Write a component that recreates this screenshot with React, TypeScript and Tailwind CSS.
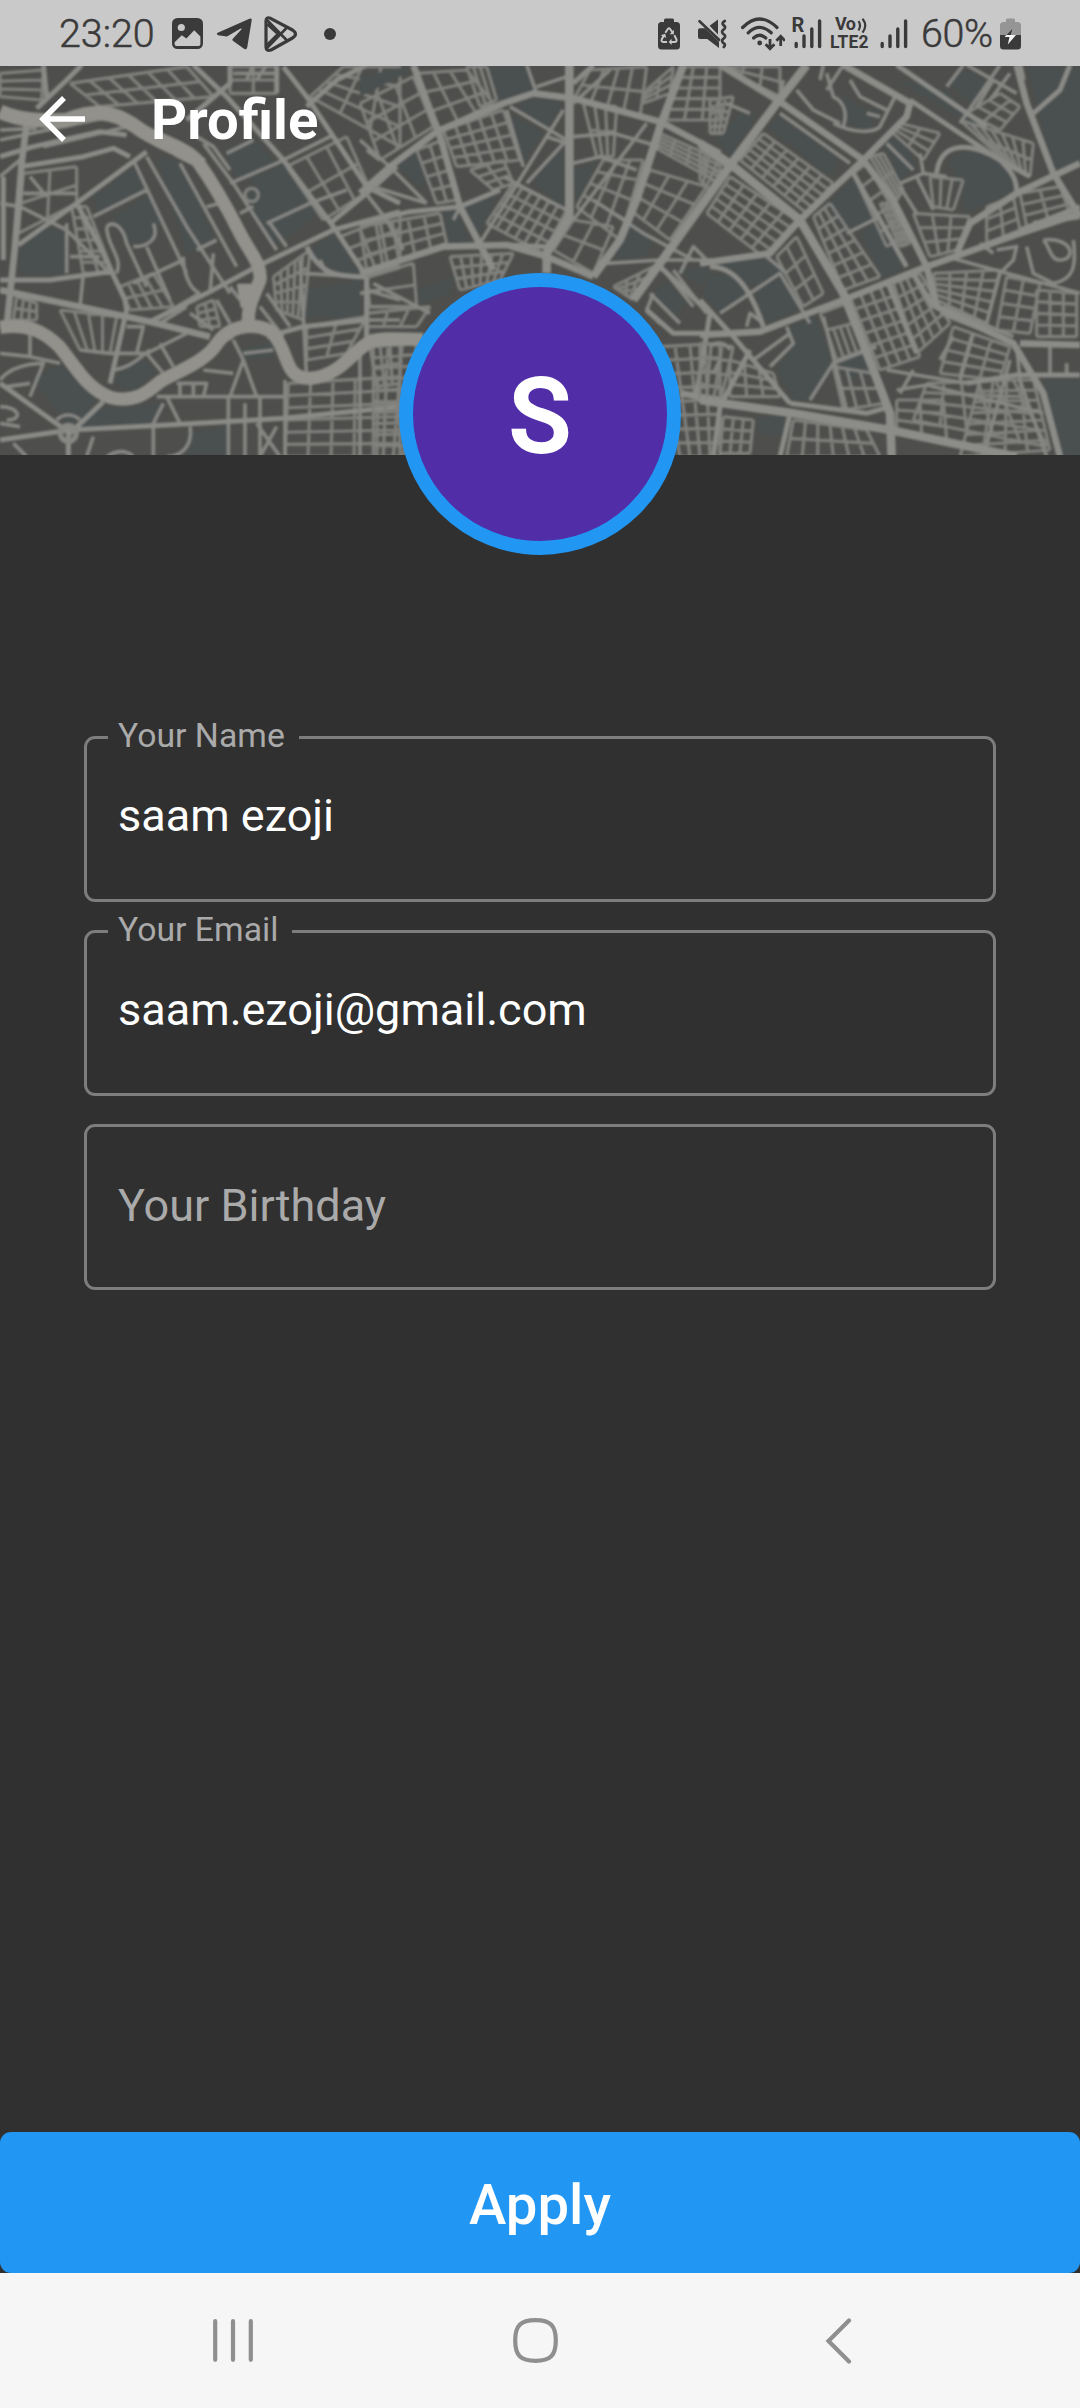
import React from "react";

type Pt = [number, number];
type Mesh = [Pt, Pt, Pt, Pt, number, number];

/* Street mesh between four corners: a-b is the top edge, d-c the bottom edge. */
function meshPath([a, b, c, d, nx, ny]: Mesh): string {
  const mix = (p: Pt, q: Pt, t: number): Pt => [p[0] + (q[0] - p[0]) * t, p[1] + (q[1] - p[1]) * t];
  const seg = (p: Pt, q: Pt) => `M${p[0].toFixed(1)} ${p[1].toFixed(1)}L${q[0].toFixed(1)} ${q[1].toFixed(1)}`;
  let out = "";
  for (let i = 0; i <= nx; i++) out += seg(mix(a, b, i / nx), mix(d, c, i / nx));
  for (let j = 0; j <= ny; j++) out += seg(mix(a, d, j / ny), mix(b, c, j / ny));
  return out;
}

type Sheet = { x: number; parks: string; meshes: Mesh[]; minor: string; mid: string; major: string };

const SHEETS: Sheet[] = [
  {
    x: 0,
    parks:
      "M280 410L400 320L450 390L300 460ZM670 270L770 240L830 310L710 360ZM760 350L850 310L960 460L830 560L730 430ZM60 560L140 500L200 520V640H55ZM340 470L450 400L490 470L460 550L390 550ZM915 690L1080 660V780L915 770ZM100 960L180 910L300 1010L210 1110ZM930 570L1000 520L1080 640L990 650ZM330 960L420 890L470 930L400 1000ZM470 290L540 300L650 550L560 580ZM250 1050L490 1030L460 1090L240 1100ZM560 1120L680 1100V1190H550ZM720 870L830 840L820 890L740 900Z",
    meshes: [
      [[210, 70], [560, 20], [640, 110], [300, 140], 6, 2],
      [[0, 40], [130, 30], [125, 120], [0, 110], 1, 3],
      [[70, 340], [230, 320], [230, 430], [55, 520], 2, 2],
      [[215, 440], [260, 440], [340, 640], [250, 640], 2, 6],
      [[360, 680], [460, 640], [520, 740], [390, 750], 4, 2],
      [[180, 750], [350, 770], [330, 880], [240, 870], 4, 1],
      [[820, 650], [930, 570], [910, 780], [830, 750], 5, 4],
      [[1030, 20], [1200, 20], [1200, 260], [930, 110], 3, 4],
      [[860, 320], [1040, 230], [1110, 390], [970, 480], 3, 2],
      [[1020, 530], [1200, 460], [1200, 600], [1090, 640], 3, 3],
      [[865, 970], [1200, 950], [1200, 1190], [855, 1190], 5, 6],
      [[1110, 860], [1200, 850], [1200, 970], [1130, 980], 3, 2],
      [[920, 800], [1100, 770], [1040, 880], [920, 900], 2, 3],
      [[50, 710], [110, 730], [110, 780], [40, 780], 3, 2],
      [[590, 740], [640, 720], [660, 800], [600, 800], 2, 3],
      [[690, 20], [830, 20], [830, 100], [690, 100], 2, 2],
    ],
    minor:
      "M0 350L60 300M0 240L330 170M70 400L230 400M90 350L140 410M0 430L60 440L200 510L330 640M400 300L560 640M440 290L560 500L690 700M540 310L710 620M620 440L660 430M590 570L650 540M550 590C550 640 570 690 600 700M640 580L630 700M280 470L440 390M320 500C340 480 370 500 380 550L440 680M320 500C320 560 370 590 350 640M400 560C440 560 480 540 460 490M440 560L510 720M400 670L550 600M200 490V640M210 590H300M250 640L240 740M610 250L700 370L830 570M690 370L830 310L1000 225M800 490L930 430M810 490L860 560M720 460L760 440M900 600L910 770L920 960M960 600L980 640M0 880L90 890L180 910M90 820V890M0 960C30 920 90 910 130 910L90 1010M20 980L90 970M240 870L330 880L440 880L560 820M380 800L430 800L410 880M440 880L490 940M480 850L520 920M340 930C400 920 420 890 450 870M610 930L700 940M700 840L730 900L690 1010M730 900L770 1010M660 850L700 830M730 880L820 870M470 1010L860 1010M500 1010L540 1090M490 1030L460 1090V1190M570 1100C580 1160 540 1190 500 1190M530 970L620 970L610 1010M540 970V1010M580 970V1010M685 1010V1190M735 1030V1190M780 1010V1190L830 1100M770 1090L840 1190M855 960V1190M0 1040C60 1040 70 1080 20 1080M40 1150L80 1190M320 1190C350 1170 380 1170 400 1190M280 1130L260 1190M170 1080C190 1060 220 1060 240 1080M1100 780H1200M1100 690L1200 720M1100 740H1200M780 740L850 830M800 700L870 800M570 760L640 810M480 790L560 740M650 720L690 790M690 680L720 720M760 15L740 60M800 15L770 60M700 40H830M910 640L1080 650M480 770L600 700M0 210L110 205M130 260L380 200M0 1090L60 1100M680 280L760 240M930 430L1040 390M590 230L640 260L690 330",
    mid: "M110 145L200 60L245 15M130 15L140 110M55 555L230 430L440 275M0 290L100 260L300 215L380 225M60 320L250 290L340 265L390 290M0 660H150L330 635M230 430L300 560L375 720L380 750L330 970M450 785L620 700L780 615L1000 510L1200 455M580 15L680 110L850 300L1000 500L1100 650V830M1200 310L1100 400L990 490M560 180L690 70V15M830 15V100M850 20L920 110L1000 230L1100 380L1200 430M920 140L1010 60L1100 15M920 560C960 640 1000 650 1100 650L1200 620M800 830L910 800L1100 780M0 1140L210 1110L500 1095L850 1075L1200 1040M0 970L210 1120L310 1025M205 1120V1190M10 350V600",
    major: "M80 190L65 310L45 560L20 800M0 690L240 740L450 785L630 830",
  },
  {
    x: 1080,
    parks:
      "M380 20H500L520 90L420 120ZM470 140L520 110L610 130L560 200ZM450 160L550 220L490 310ZM540 340L610 260V440L520 370ZM780 540L810 480L880 540L860 590L760 600ZM0 50L140 20L140 40L0 110ZM100 310L160 260L220 370L180 380ZM310 440L410 400L360 530ZM250 460L290 450L330 545L270 550ZM640 330L710 310L650 430ZM160 690L280 650L270 700L170 740ZM880 700L920 660L980 730L940 770ZM960 630L1050 620L1020 680Z",
    meshes: [
      [[0, 130], [160, 50], [220, 200], [60, 300], 3, 3],
      [[170, 40], [320, 30], [400, 130], [240, 210], 3, 3],
      [[320, 20], [380, 20], [410, 120], [360, 140], 3, 1],
      [[250, 210], [430, 150], [480, 300], [290, 320], 5, 4],
      [[170, 270], [250, 240], [290, 420], [230, 430], 2, 4],
      [[330, 330], [430, 300], [460, 370], [400, 390], 2, 3],
      [[460, 370], [620, 450], [550, 580], [380, 490], 6, 4],
      [[690, 30], [860, 20], [840, 170], [640, 120], 4, 2],
      [[670, 130], [770, 140], [760, 290], [710, 290], 3, 2],
      [[730, 300], [850, 300], [780, 540], [650, 440], 3, 4],
      [[860, 90], [940, 20], [930, 100], [850, 130], 2, 3],
      [[900, 220], [1080, 300], [1080, 370], [880, 260], 4, 4],
      [[870, 330], [1040, 380], [930, 540], [810, 450], 3, 3],
      [[0, 500], [240, 460], [260, 550], [20, 630], 5, 3],
      [[270, 590], [460, 580], [420, 660], [300, 690], 6, 3],
      [[20, 650], [160, 610], [170, 740], [30, 740], 1, 2],
      [[20, 760], [210, 740], [170, 800], [20, 800], 3, 1],
      [[40, 860], [170, 850], [130, 1190], [40, 1190], 3, 10],
      [[640, 480], [760, 500], [700, 640], [580, 570], 2, 2],
      [[760, 680], [880, 620], [820, 720], [790, 700], 3, 3],
      [[900, 860], [1080, 850], [1080, 1190], [960, 1190], 4, 8],
      [[960, 20], [1080, 20], [1080, 180], [920, 180], 3, 5],
    ],
    minor:
      "M0 240L100 330L200 430M10 390L80 480L130 570M40 380L200 430M500 15L530 100M530 80L620 50M450 140L620 240M610 150L360 550M440 150L490 320M620 240L500 370M620 450L430 350M560 230L620 250M640 230L760 220L900 260M640 310L720 290L830 330M860 190L640 480M700 420L850 520L1000 600M40 670L210 760M750 30L640 130M0 860V1190M740 610L900 600L1080 600M870 700L960 790M920 640L1000 740M880 700L860 750L900 790M960 640L1000 560L1040 600M300 440L280 480M560 590V640M0 700L60 690M940 630L1040 760M20 270L60 300",
    mid: "M0 490L150 455L300 440L420 390M640 70L700 15M440 555L560 560L620 490M900 620L1050 760L1010 1000M860 750L940 820H1080M20 650V830",
    major:
      "M0 400L90 320L230 215L430 130L520 100L640 115L900 185L1080 280M160 15L240 230L300 440L400 630M0 640L250 560L440 555L560 590L700 650M960 1000L1080 1020",
  },
  {
    x: 2100,
    parks:
      "M200 200L240 170L420 300L390 350ZM380 430L460 350L540 470L430 520ZM480 520L530 490L620 620L550 660ZM980 20H1140V300L1060 330ZM740 300L820 260L920 320L950 390L800 460L770 350ZM230 930L280 850L260 800L350 770L400 910L320 1020H280ZM590 60L740 90L880 230L740 150ZM1030 960H1140V1190H1090ZM740 60L800 30L880 70L820 140ZM20 640L100 640L150 700L60 760L10 710ZM160 690L240 650L300 750L200 790ZM50 230L130 150L170 170L90 290ZM30 610L210 590L250 640L150 680ZM420 100L500 150L540 140L510 210L430 190ZM550 250L600 230L650 310L600 360ZM420 910L490 880L510 940L440 960ZM170 1070H250V1130L170 1120Z",
    meshes: [
      [[80, 20], [240, 20], [240, 110], [60, 20], 3, 2],
      [[190, 220], [400, 370], [320, 460], [120, 300], 6, 5],
      [[90, 350], [290, 480], [190, 590], [20, 460], 5, 5],
      [[0, 270], [80, 320], [30, 390], [0, 360], 3, 3],
      [[340, 470], [390, 430], [540, 650], [430, 690], 3, 6],
      [[460, 340], [500, 310], [620, 520], [560, 560], 1, 5],
      [[510, 290], [550, 280], [610, 390], [590, 420], 3, 2],
      [[540, 430], [580, 430], [630, 550], [600, 560], 3, 7],
      [[600, 190], [720, 220], [670, 300], [580, 220], 2, 3],
      [[690, 350], [790, 360], [760, 450], [700, 440], 3, 1],
      [[640, 460], [810, 470], [770, 570], [690, 590], 3, 3],
      [[780, 180], [1000, 250], [990, 350], [900, 290], 7, 2],
      [[900, 100], [960, 140], [900, 210], [800, 160], 2, 3],
      [[860, 440], [940, 410], [960, 510], [860, 550], 2, 3],
      [[960, 400], [1080, 380], [1110, 460], [980, 500], 2, 3],
      [[700, 640], [900, 630], [860, 790], [710, 720], 4, 5],
      [[920, 650], [1020, 670], [990, 820], [890, 810], 2, 4],
      [[450, 710], [570, 670], [660, 890], [540, 930], 4, 6],
      [[580, 670], [660, 640], [750, 790], [650, 880], 4, 5],
      [[760, 800], [930, 860], [900, 960], [720, 940], 3, 4],
      [[680, 970], [940, 960], [1040, 1160], [640, 1080], 5, 4],
      [[590, 1020], [730, 1020], [740, 1140], [590, 1110], 2, 3],
      [[380, 810], [460, 790], [490, 870], [410, 900], 4, 1],
      [[360, 760], [440, 730], [460, 790], [380, 810], 1, 1],
      [[400, 920], [520, 940], [550, 1030], [430, 1050], 3, 2],
      [[1010, 690], [1130, 700], [1130, 830], [1010, 830], 3, 4],
      [[90, 900], [220, 940], [240, 1010], [90, 1010], 3, 3],
      [[0, 850], [100, 860], [60, 1030], [0, 1010], 3, 4],
      [[70, 1070], [160, 1080], [150, 1180], [60, 1180], 3, 3],
      [[280, 1080], [500, 1110], [540, 1190], [260, 1190], 6, 2],
      [[30, 120], [100, 110], [70, 220], [30, 220], 3, 5],
      [[230, 590], [290, 530], [370, 700], [310, 740], 2, 3],
      [[840, 960], [1000, 960], [1050, 1170], [780, 1190], 4, 7],
    ],
    minor:
      "M440 15L640 130M240 160L450 310M290 90L340 150L420 190M380 40L400 110C440 130 440 170 430 200M400 190C460 220 520 220 540 200L590 100M450 60L480 110L560 150M500 160L540 170M600 370L670 340L740 350M670 340L660 280M650 350L700 450M600 380L650 460M560 250L640 330M740 80L790 15M880 60L830 140M800 15L950 100M900 15L780 190M930 40L870 120M440 520L540 470M430 15L380 90M370 15L360 60M60 760L240 640L330 790M140 800L150 760L190 790M260 800L280 850L210 920M160 900L270 820M330 1020L400 910L530 860M30 860C50 840 80 850 90 870M1030 540C1120 530 1130 600 1080 600C1050 600 1050 560 1030 540M980 560L1000 640L1060 670C1120 660 1130 620 1120 540M890 570L950 560L940 600L900 640L860 790M840 550L880 580M740 590L1140 700M560 930L800 970M590 990L680 975L1030 1060M600 1000L640 930M950 860L960 960L1040 1190M1050 860V940M1100 910V945M720 760L900 830M730 740L940 830M820 820L780 960M850 1190L930 900M370 770L440 1050M720 900L760 830M60 900L40 940M250 60L240 110M150 160L80 130M200 590L260 640",
    mid: "M0 720L100 830L270 1030M630 120L900 300L990 350M710 340C720 250 800 240 900 300C940 340 950 360 950 400M800 970L950 945H1140M590 15L860 200M1110 15L1080 90L1000 160M270 1060L240 1190M60 1040L40 1190M30 620C100 620 150 680 190 800M460 340L620 620M560 660L650 880M270 1030L500 1060L570 1040M640 640L700 740M150 870L60 1040M1000 490L1140 470M960 510L1140 440M970 60L960 15",
    major:
      "M60 15L240 125L490 300L580 420L680 620L710 740L940 850L1030 1000L1080 1190M430 15L630 130L620 170L490 300L300 480L210 580L0 610M0 825L180 815L430 720L680 620L960 520L1140 460M950 15L980 130L1060 340L1140 470M770 580L810 490L950 400L1140 310M960 850L1140 855",
  },
];

function MapBackdrop() {
  return (
    <svg className="absolute inset-0 h-[389px] w-full" viewBox="0 18 3240 1167" preserveAspectRatio="none" fill="none">
      <rect y="18" width="3240" height="1167" fill="#4e4f4c" />
      <g className="blur-[2.4px]" strokeLinejoin="round">
        {SHEETS.map((s) => (
          <g key={s.x} transform={`translate(${s.x} 0)`}>
            <path d={s.parks} fill="#4a504f" />
            <path d={s.meshes.map(meshPath).join("")} stroke="#80807d" strokeWidth="9.5" />
            <path d={s.minor} stroke="#868683" strokeWidth="11" />
            <path d={s.mid} stroke="#8a8a87" strokeWidth="15" />
            <path d={s.major} stroke="#8b8b88" strokeWidth="20" />
          </g>
        ))}
        <circle cx="755" cy="405" r="20" stroke="#81817e" strokeWidth="10" />
        <circle cx="205" cy="1120" r="24" stroke="#868683" strokeWidth="16" />
        <g stroke="#8c8c89" strokeWidth="26">
          <path d="M1708 0V470L1640 580V640" />
          <path d="M2050 15L1980 200L1910 420L1860 540L1780 650" strokeWidth="24" />
          <path d="M2420 15L2330 130L2195 310L1980 610L1900 720" />
          <path d="M2100 250L2195 315L2400 480L2530 700L2620 930L2670 1060L2675 1190" />
          <path d="M2100 1020L2380 1060L2670 1110L3050 1190" />
        </g>
        <g stroke="#92918b">
          <path d="M0 155C60 180 120 185 200 180C280 150 330 150 400 195C460 240 520 260 570 285" strokeWidth="44" />
          <path d="M450 225C520 255 560 270 590 300C640 370 680 440 720 520C750 580 785 610 780 660C765 700 742 730 745 795" strokeWidth="40" />
          <path d="M500 235L610 300L600 320L530 285Z" strokeWidth="14" fill="#92918b" />
          <path d="M715 675H790L765 740H725Z" fill="#92918b" strokeWidth="8" />
          <path d="M0 802C80 790 130 812 180 862C230 925 260 985 330 1012C400 1030 440 1000 480 965C540 930 620 905 655 845C700 785 790 790 820 822C870 880 850 955 930 955C1020 950 1060 870 1110 845C1150 832 1200 838 1270 838" strokeWidth="40" />
        </g>
      </g>
    </svg>
  );
}

function Signal({ className }: { className: string }) {
  return (
    <svg className={className} viewBox="0 0 28 30" stroke="#3a3a3a" strokeWidth="3.4" strokeLinecap="round">
      <path d="M2.2 24.5V27.5M10 17V27.5M17.8 10V27.5M25.6 2V27.5" />
    </svg>
  );
}

function StatusBar() {
  return (
    <div className="relative z-10 flex h-[66px] items-center bg-[#c9c9c9] pl-[59px] pt-px text-[#3a3a3a]">
      <span className="w-[113px] text-[39.4px] font-light leading-[46px] [-webkit-text-stroke:0.5px_#3a3a3a]">23:20</span>
      <svg className="h-[31px] w-[31px]" viewBox="0 0 31 31">
        <rect width="31" height="31" rx="5.5" fill="#3a3a3a" />
        <circle cx="9.3" cy="9.5" r="3.6" fill="#c9c9c9" />
        <path d="M2.6 24.2L9.8 17.3L14.4 20.5L22.2 12.3L28.4 18.5V26Q28.4 28 26.4 28H4.6Q2.6 28 2.6 26Z" fill="#c9c9c9" />
      </svg>
      <svg className="ml-[13px] h-8 w-9" viewBox="0 0 36 32">
        <path d="M1.2 15.1L34 .5Q36 0 35.7 2.3L31.2 29.5Q30.7 32 28.4 30.9L16.8 22.8Q15.8 21.8 16.8 20.8L25.6 11.2Q26 9.8 24.2 10.8L11 18.6L2 17.2Q0 16.2 1.2 15.1Z" fill="#3a3a3a" />
      </svg>
      <svg className="ml-3 h-9 w-[34px]" viewBox="0 0 34 36" fill="none" stroke="#3a3a3a" strokeWidth="3.2" strokeLinejoin="round">
        <path d="M2 5Q2 0.5 6.5 2.3L28.5 14Q34.5 18 28.5 22L7 34Q2 35.5 2 31Z" />
        <path d="M3 4L23.5 25M3 32L23.5 11M3 8L14 18L3 29" strokeWidth="2.6" />
      </svg>
      <span className="ml-[26px] h-3 w-3 rounded-full bg-[#3a3a3a]" />

      <svg className="ml-[322px] h-8 w-[22px]" viewBox="0 0 22 32">
        <path d="M6 4V2Q6 .5 7.5.5H14.5Q16 .5 16 2V4H18.5Q22 4 22 7.5V28Q22 31.5 18.5 31.5H3.5Q0 31.5 0 28V7.5Q0 4 3.5 4Z" fill="#3a3a3a" />
        <path d="M7.3 14.8L10 10.8Q11 9.7 12 10.8L14.5 14.5M16.4 17.2L18.5 21.5Q19 24 16.5 24H13M9 24H5.3Q3 23.8 3.7 21.5L5.8 17.5" fill="none" stroke="#c9c9c9" strokeWidth="2" />
        <path d="M15.9 11.8V16.2H11.7ZM13.6 20.8V27L10.6 24ZM2.7 17.2L7.2 15.8L8.2 20Z" fill="#c9c9c9" />
      </svg>
      <svg className="ml-[17px] h-[30px] w-[31px]" viewBox="0 0 31 30">
        <path d="M1 11Q1 9.2 3 9.2H8L22 22.8V29L10.3 20H3Q1 20 1 18ZM12.6 6.8L21 .4V15.5Z" fill="#3a3a3a" />
        <path d="M2.5 2.2L22 20.8M27.8 2Q24.3 4 26.3 6Q29.8 8.2 26.8 10.4Q23.6 12.6 26.3 15Q29.8 17 26.8 19.4Q23.6 21.8 26.3 24Q29.3 25.5 26.8 28" fill="none" stroke="#3a3a3a" strokeWidth="2.7" strokeLinecap="round" />
      </svg>
      <svg className="ml-[13px] h-[34px] w-11" viewBox="0 0 44 34" fill="none" stroke="#3a3a3a" strokeWidth="3.2" strokeLinecap="round">
        <path d="M1.6 10.5Q18.5-6.5 36 10.5M7.2 15.8Q18.5 5 30.2 15.8M12.6 21Q18.7 15.5 24.8 21" />
        <path d="M29 22V31.5M24.6 27.3L29 31.7L33.4 27.3M39.7 29V19.5M35.4 23.7L39.7 19.3L44 23.7" strokeWidth="2.8" strokeLinecap="butt" />
        <circle cx="18.7" cy="26" r="2.4" fill="#3a3a3a" stroke="none" />
      </svg>
      <div className="relative ml-2 h-[30px] w-[29px]">
        <span className="absolute -top-1.5 -left-[1.5px] text-[20px] font-bold leading-[24px]">R</span>
        <Signal className="absolute right-0 top-0 h-[30px] w-[28px]" />
      </div>
      <div className="relative ml-[9px] h-8 w-10">
        <span className="absolute -top-1 left-1 text-[18px] font-bold leading-5 tracking-[-0.6px]">Vo</span>
        <svg className="absolute right-1 top-0 h-[15px] w-2.5" viewBox="0 0 10 15" fill="none" stroke="#3a3a3a" strokeWidth="2.2">
          <path d="M1.5 3Q4.5 7.5 1.5 12.5M5.5.8Q11 7.5 5.5 14.6" />
        </svg>
        <span className="absolute -left-px top-[14px] text-[17.5px] font-bold leading-5 tracking-[0.1px]">LTE2</span>
      </div>
      <Signal className="ml-[9px] h-[30px] w-[28px]" />
      <span className="ml-[13px] w-[79px] whitespace-nowrap text-[39.4px] font-light leading-[46px] tracking-[-0.4px] [-webkit-text-stroke:0.5px_#3a3a3a]">60%</span>
      <svg className="h-8 w-[21px]" viewBox="0 0 21 32">
        <path d="M6 4V2Q6 .5 7.5.5H13.5Q15 .5 15 2V4H17.5Q21 4 21 7.5V17H0V7.5Q0 4 3.5 4Z" fill="#959595" />
        <path d="M0 17H21V28Q21 31.5 17.5 31.5H3.5Q0 31.5 0 28Z" fill="#3a3a3a" />
        <path d="M12.5 10.5L4.5 19H9.5L7.8 26.5L16 17H11Z" fill="#f4f4f4" />
        <path d="M12.5 10.5L6.4 17H11Z" fill="#3a3a3a" />
      </svg>
    </div>
  );
}

function Field({ label, value }: { label: string; value?: string }) {
  if (!value) {
    return (
      <div className="flex h-[166px] items-center rounded-[11px] border-[3px] border-[#7d7d7d] pb-[3px] pl-[31px]">
        <span className="text-[45px] leading-[52px] text-[#aaaaaa]">{label}</span>
      </div>
    );
  }
  return (
    <fieldset className="-mt-[19px] h-[185px] rounded-[11px] border-[3px] border-[#7d7d7d] pl-[21px]">
      <legend className="h-10 pl-2.5 pr-[14px] text-[33.75px] leading-[38px] text-[#aaaaaa]">{label}</legend>
      <div className="pl-2.5 pt-[33px] text-[45px] leading-[52px] text-white">{value}</div>
    </fieldset>
  );
}

export default function App() {
  return (
    <div className="flex h-[2408px] w-[1080px] flex-col overflow-hidden bg-[#303030] font-[Roboto,sans-serif]">
      <StatusBar />
      <header className="relative h-[389px] shrink-0">
        <MapBackdrop />
        <div className="relative flex h-[105px] items-center pl-[39px]">
          <svg className="h-[46px] w-[46px]" viewBox="0 0 46 46" fill="none" stroke="#fff" strokeWidth="5.6">
            <path d="M46 23H5M25 2L4 23L25 44" />
          </svg>
          <h1 className="ml-[66px] pt-0.5 text-[56.25px] font-bold leading-[66px] text-white">Profile</h1>
        </div>
        <div className="absolute left-[399px] top-[207px] flex h-[282px] w-[282px] items-center justify-center rounded-full border-[14px] border-[#2196f3] bg-[#512da8]">
          <span className="pt-1 text-[103px] font-medium leading-none text-white [-webkit-text-stroke:1.8px_#fff]">S</span>
        </div>
      </header>
      <main className="flex flex-1 flex-col gap-7 px-[84px] pt-[281px]">
        <Field label="Your Name" value="saam ezoji" />
        <Field label="Your Email" value="saam.ezoji@gmail.com" />
        <Field label="Your Birthday" />
      </main>
      <button className="h-[141px] shrink-0 rounded-[11px] bg-[#2196f3] pt-[5px] text-[56.25px] font-medium leading-[66px] text-white">Apply</button>
      <nav className="flex h-[135px] shrink-0 items-center bg-[#f6f6f6] pl-[213px]">
        <svg className="h-[43px] w-10" viewBox="0 0 40 43" stroke="#8f8f8f" strokeWidth="4.2" strokeLinecap="round">
          <path d="M2.2 2.2V40.8M20 2.2V40.8M37.8 2.2V40.8" />
        </svg>
        <svg className="ml-[260px] h-[45px] w-[45px]" viewBox="0 0 45 45" fill="none" stroke="#8f8f8f" strokeWidth="4.2">
          <path d="M22.5 2.2C37.5 2.2 42.8 7.5 42.8 22.5S37.5 42.8 22.5 42.8S2.2 37.5 2.2 22.5S7.5 2.2 22.5 2.2Z" />
        </svg>
        <svg className="ml-[267px] h-[46px] w-[27px]" viewBox="0 0 27 46" fill="none" stroke="#8f8f8f" strokeWidth="4.2" strokeLinecap="round">
          <path d="M24 2.5L3.5 23L24 43.5" />
        </svg>
      </nav>
    </div>
  );
}
